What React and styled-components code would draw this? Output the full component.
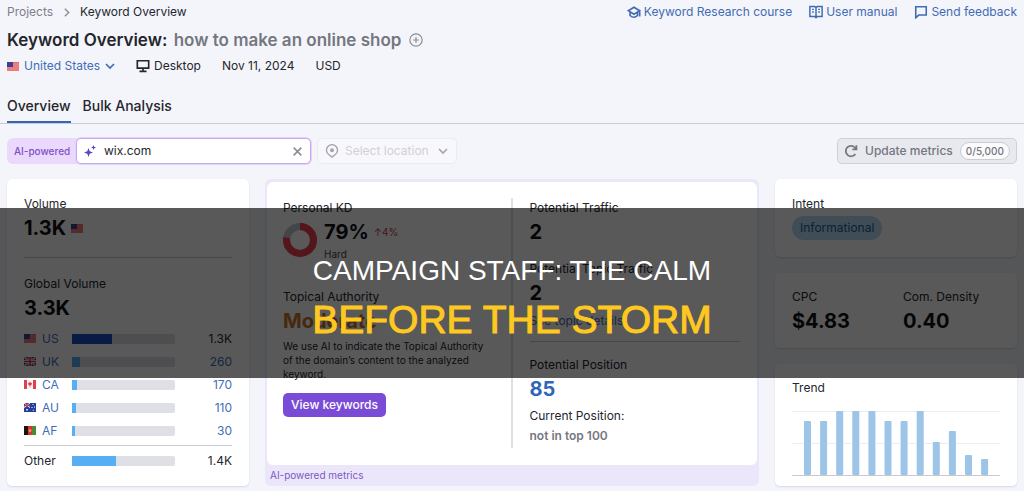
import React from "react";
import styled, { createGlobalStyle } from "styled-components";

const GlobalStyle = createGlobalStyle`
  * { box-sizing: border-box; }
  body {
    margin: 0;
    background: #f4f5fa;
    color: #24262d;
    font-family: Inter, "Liberation Sans", sans-serif;
    font-size: 12px;
    line-height: 20px;
  }
  h1, h2, p, dl, dd { margin: 0; }
  button, input, select { font: inherit; color: inherit; margin: 0; }
  svg { display: block; flex: none; }
`;

const Page = styled.div`
  position: relative;
  padding-bottom: 5px;
  overflow: hidden;
`;
const Header = styled.header`
  padding: 2px 7px 0;
  border-bottom: 1px solid #c9ccd8;
`;
const TopRow = styled.div`
  display: flex;
  justify-content: space-between;
  height: 20px;
`;
const Crumbs = styled.nav`
  display: flex;
  align-items: center;
  gap: 8px;
`;
const CrumbLink = styled.a`
  color: #7d808a;
  text-decoration: none;
`;
const HelpLinks = styled.nav`
  display: flex;
  gap: 17px;
`;
const HelpLink = styled.a`
  display: flex;
  align-items: center;
  gap: 3px;
  color: #426bb3;
  text-decoration: none;
`;
const TitleRow = styled.div`
  display: flex;
  align-items: center;
  gap: 8px;
  margin-top: 6px;
`;
const Title = styled.h1`
  font-size: 17px;
  line-height: 24px;
  font-weight: 600;
`;
const Query = styled.span`
  margin-left: 2px;
  color: #757780;
`;
const IconButton = styled.button`
  display: flex;
  padding: 0;
  border: 0;
  background: none;
  color: #8b8e98;
`;
const Meta = styled.div`
  display: flex;
  align-items: center;
  gap: 21px;
  margin-top: 4px;
`;
const MetaItem = styled.span`
  display: flex;
  align-items: center;
  gap: 4px;
`;
const Country = styled.label`
  display: flex;
  align-items: center;
  gap: 5px;
  color: #3f6db8;
`;
const PlainSelect = styled.select`
  appearance: none;
  field-sizing: content;
  padding: 0;
  border: 0;
  background: none;
  line-height: 20px;
  opacity: 1;
`;
const Tabs = styled.nav`
  display: flex;
  gap: 12px;
  margin-top: 18px;
`;
const Tab = styled.a`
  height: 29px;
  line-height: 24px;
  font-weight: 500;
  font-size: 14px;
  color: inherit;
  text-decoration: none;
  border-bottom: 2px solid ${(p) => (p.$active ? "#3666b0" : "transparent")};
`;
const Toolbar = styled.div`
  display: flex;
  align-items: center;
  gap: 6px;
  padding: 14px 7px 15px;
`;
const DomainField = styled.div`
  display: flex;
  width: 304px;
  height: 26px;
  border-radius: 6px;
  background: #ead9fc;
`;
const DomainLabel = styled.label`
  flex: 1;
  padding-left: 7px;
  font-size: 10px;
  font-weight: 500;
  line-height: 26px;
  white-space: nowrap;
  color: #7d50c8;
`;
const DomainBox = styled.div`
  display: flex;
  align-items: center;
  gap: 8px;
  width: 235px;
  padding: 0 7px;
  border: 1px solid #c9aaf0;
  border-radius: 5px;
  background: #fff;
  box-shadow: 0 0 0 1px #e3d1fa;
`;
const DomainInput = styled.input`
  flex: 1;
  min-width: 0;
  padding: 0;
  border: 0;
  outline: 0;
  background: none;
`;
const Location = styled.label`
  display: flex;
  align-items: center;
  gap: 6px;
  width: 140px;
  height: 26px;
  padding: 0 8px 0 7px;
  border: 1px solid #ebecf2;
  border-radius: 5px;
  background: #f8f8fc;
  color: #a3a6b0;
`;
const LocationSelect = styled(PlainSelect)`
  flex: 1;
  min-width: 0;
  color: #cfd1d9;
`;
const UpdateButton = styled.button`
  display: flex;
  align-items: center;
  gap: 7px;
  height: 26px;
  margin-left: auto;
  padding: 0 6px;
  border: 1px solid #cfd0d6;
  border-radius: 5px;
  background: #e8e9ee;
  font-weight: 500;
  color: #74767e;
`;
const Quota = styled.span`
  padding: 0 5px;
  border: 1px solid #cbccd2;
  border-radius: 9px;
  background: #fbfbfd;
  font-size: 10px;
  line-height: 16px;
`;
const Board = styled.main`
  display: grid;
  grid-template-columns: 242fr 494fr 242fr;
  gap: 16px;
  padding: 0 7px;
`;
const Card = styled.section`
  padding: ${(p) => p.$pad || "15px 17px 14px"};
  border-radius: 5px;
  background: #fff;
  box-shadow: 0 1px 2px #d5d8e4;
`;
const Label = styled.h2`
  font-size: 12px;
  line-height: 20px;
  font-weight: 400;
`;
const Value = styled.p`
  display: flex;
  align-items: center;
  gap: 5px;
  font-size: 20px;
  line-height: 28px;
  font-weight: 700;
  color: ${(p) => p.$color || "#101114"};
`;
const Rule = styled.hr`
  height: 1px;
  margin: ${(p) => p.$space || "15px 0 16px"};
  border: 0;
  background: #cbccd3;
`;
const CountryTable = styled.table`
  width: 100%;
  margin-top: 5px;
  border-collapse: collapse;
  line-height: 20px;
  td, th { height: 23px; padding: 0; font-weight: 400; text-align: left; }
  th { width: 48px; }
  td:last-child { text-align: right; }
`;
const OtherTable = styled(CountryTable)`
  margin-top: 0;
`;
const Place = styled.a`
  display: flex;
  align-items: center;
  gap: 6px;
  color: #3f6db8;
  text-decoration: none;
`;
const Amount = styled.a`
  color: ${(p) => (p.$dark ? "#24262d" : "#3f6db8")};
  text-decoration: none;
`;
const Track = styled.div`
  width: 103px;
  height: 10px;
  border-radius: 0 2px 2px 0;
  overflow: hidden;
  background: #dfe0e5;
`;
const Fill = styled.div`
  height: 100%;
  background: ${(p) => p.$color};
`;
const AiFrame = styled.section`
  display: flex;
  flex-direction: column;
  padding: 3px 2px 1px;
  border-radius: 6px;
  background: #ece6fa;
`;
const AiPanel = styled.div`
  flex: 1;
  display: grid;
  grid-template-columns: 1fr 2px 1fr;
  gap: 17px;
  padding: 16px 17px 17px 16px;
  border-radius: 6px;
  background: #fff;
`;
const AiNote = styled.p`
  padding-left: 3px;
  font-size: 10px;
  line-height: 20px;
  color: #7d58c4;
`;
const Divider = styled.div`
  background: #dedfe4;
`;
const Metric = styled.div`
  margin-bottom: ${(p) => p.$after || 0}px;
`;
const Difficulty = styled.div`
  display: flex;
  align-items: center;
  gap: 7px;
`;
const Delta = styled.span`
  font-size: 10px;
  font-weight: 400;
  color: #c8404a;
`;
const Small = styled.p`
  font-size: 10px;
  line-height: 16px;
  color: #44464e;
`;
const Copy = styled.p`
  margin-top: 4px;
  font-size: 10px;
  line-height: 14px;
`;
const PrimaryButton = styled.button`
  height: 24px;
  margin-top: 12px;
  padding: 0 8px;
  border: 0;
  border-radius: 5px;
  background: #7a4cd6;
  color: #fff;
  font-weight: 500;
`;
const TopicLink = styled.a`
  display: block;
  margin-top: 4px;
  color: #3f6db8;
  text-decoration: none;
`;
const Position = styled.p`
  margin-top: 3px;
`;
const Rank = styled.p`
  font-weight: 600;
  color: #757780;
`;
const Stack = styled.div`
  display: flex;
  flex-direction: column;
  gap: 16px;
`;
const Pill = styled.span`
  display: block;
  width: fit-content;
  margin-top: 2px;
  padding: 0 8px;
  border-radius: 12px;
  background: #b8dcf6;
  color: #2a5f98;
  line-height: 24px;
`;
const Pair = styled.div`
  display: grid;
  grid-template-columns: 1fr 1fr;
  gap: 14px;
`;
const TrendCard = styled(Card)`
  flex: 1;
`;
const Chart = styled.svg`
  width: 100%;
  margin-top: 12px;
`;
const Banner = styled.aside`
  position: absolute;
  top: 208px;
  left: 0;
  right: 0;
  height: 170px;
  display: flex;
  flex-direction: column;
  align-items: center;
  justify-content: center;
  padding-top: 6px;
  background: rgba(0, 0, 0, 0.65);
  font-family: "Liberation Sans", Arial, sans-serif;
  text-align: center;
`;
const BannerLead = styled.p`
  font-size: 28px;
  line-height: 48px;
  color: #fff;
`;
const BannerMain = styled.p`
  font-size: 39px;
  line-height: 50px;
  color: #fec821;
  -webkit-text-stroke: 1px #fec821;
`;

const Icon = ({ size = 14, box = 16, width = 1.8, children }) => (
  <svg width={size} height={size} viewBox={`0 0 ${box} ${box}`} fill="none" stroke="currentColor" strokeWidth={width} aria-hidden="true">
    {children}
  </svg>
);

const Chevron = () => (
  <Icon size={10} box={10} width={1.7}><path d="M1 3l4 4 4-4" /></Icon>
);

const flags = {
  US: (
    <>
      <path fill="#e9696d" d="M0 0h12v9H0z" />
      <path stroke="#f3b3b5" strokeWidth=".6" d="M0 2h12M0 4h12M0 6h12M0 8h12" />
      <path fill="#3b3f95" d="M0 0h6v5H0z" />
    </>
  ),
  UK: (
    <>
      <path fill="#27357e" d="M0 0h12v9H0z" />
      <path stroke="#fff" strokeWidth="1.8" d="M0 0l12 9M12 0L0 9" />
      <path stroke="#d22f3d" strokeWidth=".7" d="M0 0l12 9M12 0L0 9" />
      <path stroke="#fff" strokeWidth="3" d="M6 0v9M0 4.500h12" />
      <path stroke="#d22f3d" strokeWidth="1.6" d="M6 0v9M0 4.500h12" />
    </>
  ),
  CA: (
    <>
      <path fill="#f7f2f3" d="M0 0h12v9H0z" />
      <path fill="#e0404b" d="M0 0h3v9H0zM9 0h3v9H9zM6 1.500l.8 1.200 1.200.3-.4 1.800-1.300 1v1.400h-.6V5.800l-1.300-1L4 3l1.200-.3z" />
    </>
  ),
  AU: (
    <>
      <path fill="#233f9c" d="M0 0h12v9H0z" />
      <path stroke="#fff" strokeWidth="1" d="M0 0l6 4.500M6 0L0 4.500" />
      <path stroke="#d22f3d" strokeWidth="1" d="M3 0v4.500M0 2.200h6" />
      <path fill="#fff" d="M2.300 6h1.500v1.500H2.300zM8.500 1h1v1h-1zM7.500 4h1v1h-1zM10 3.500h1v1h-1zM8.800 6.700h1v1h-1z" />
    </>
  ),
  AF: (
    <>
      <path fill="#1d1412" d="M0 0h4v9H0z" />
      <path fill="#d23a2c" d="M4 0h4v9H4z" />
      <path fill="#4c8b35" d="M8 0h4v9H8z" />
      <circle cx="6" cy="4.500" r="1.500" fill="#ee8a70" />
    </>
  ),
};
const Flag = ({ code }) => (
  <svg width="12" height="9" viewBox="0 0 12 9" aria-hidden="true">{flags[code]}</svg>
);

const countries = [
  { code: "US", amount: "1.3K", share: 39, color: "#1c4fc4", dark: true },
  { code: "UK", amount: "260", share: 8, color: "#57aef3" },
  { code: "CA", amount: "170", share: 5, color: "#57aef3" },
  { code: "AU", amount: "110", share: 3.5, color: "#57aef3" },
  { code: "AF", amount: "30", share: 2.5, color: "#57aef3" },
];
const trend = [54, 54, 64, 64, 64, 54, 54, 64, 33, 44, 20, 16];

const Bar = ({ share, color }) => (
  <Track><Fill $color={color} style={{ width: `${share}%` }} /></Track>
);

const VolumeCard = () => (
  <Card>
    <Label>Volume</Label>
    <Value>1.3K <Flag code="US" /></Value>
    <Rule />
    <Label>Global Volume</Label>
    <Value>3.3K</Value>
    <CountryTable>
      <tbody>
        {countries.map((c) => (
          <tr key={c.code}>
            <th scope="row"><Place href="#"><Flag code={c.code} />{c.code}</Place></th>
            <td><Bar share={c.share} color={c.color} /></td>
            <td><Amount href="#" $dark={c.dark}>{c.amount}</Amount></td>
          </tr>
        ))}
      </tbody>
    </CountryTable>
    <Rule $space="3px 0" />
    <OtherTable>
      <tbody>
        <tr>
          <th scope="row">Other</th>
          <td><Bar share={43} color="#57aef3" /></td>
          <td>1.4K</td>
        </tr>
      </tbody>
    </OtherTable>
  </Card>
);

const Donut = () => (
  <svg width="34" height="34" viewBox="0 0 34 34" fill="none" strokeWidth="7" aria-hidden="true">
    <circle cx="17" cy="17" r="13.500" stroke="#c4c7cf" />
    <circle cx="17" cy="17" r="13.500" stroke="#f0404c" pathLength="100" strokeDasharray="78 22" transform="rotate(-90 17 17)" />
  </svg>
);

const AiCard = () => (
  <AiFrame>
    <AiPanel>
      <div>
        <Metric $after={25}>
          <Label>Personal KD</Label>
          <Difficulty>
            <Donut />
            <div>
              <Value>79% <Delta>↑4%</Delta></Value>
              <Small>Hard</Small>
            </div>
          </Difficulty>
        </Metric>
        <Label>Topical Authority</Label>
        <Value $color="#c4762a">Moderate</Value>
        <Copy>We use AI to indicate the Topical Authority of the domain’s content to the analyzed keyword.</Copy>
        <PrimaryButton type="button">View keywords</PrimaryButton>
      </div>
      <Divider />
      <div>
        <Metric $after={13}>
          <Label>Potential Traffic</Label>
          <Value>2</Value>
        </Metric>
        <Label>Potential Topic Traffic</Label>
        <Value>2</Value>
        <TopicLink href="#">See topic details</TopicLink>
        <Rule $space="10px 0 13px" />
        <Label>Potential Position</Label>
        <Value $color="#2f66b8">85</Value>
        <Position>Current Position:</Position>
        <Rank>not in top 100</Rank>
      </div>
    </AiPanel>
    <AiNote>AI-powered metrics</AiNote>
  </AiFrame>
);

const TrendChart = () => (
  <Chart viewBox="0 0 208 66" role="img" aria-label="Trend">
    <path stroke="#ededf1" d="M0 1.500h208M0 33.500h208" />
    {trend.map((h, i) => (
      <rect key={i} x={12 + i * 16.1} y={65 - h} width="7" height={h} rx="1" fill="#9cc5e8" />
    ))}
    <path stroke="#c9cbd3" d="M0 65.500h208" />
  </Chart>
);

export default function App() {
  return (
    <Page>
      <GlobalStyle />
      <Header>
        <TopRow>
          <Crumbs aria-label="Breadcrumb">
            <CrumbLink href="#">Projects</CrumbLink>
            <Icon size={11} box={10} width={1.3}><path d="M3.500 1.500L7 5 3.500 8.500" stroke="#8b8e98" /></Icon>
            <span>Keyword Overview</span>
          </Crumbs>
          <HelpLinks aria-label="Help">
            <HelpLink href="#">
              <Icon width={1.9}><path d="M1.500 6.500L8 2.500l6.500 4L8 10.500zM3.500 8v4Q8 16 12 12V8M14.500 6.500V13" /></Icon>
              Keyword Research course
            </HelpLink>
            <HelpLink href="#">
              <Icon width={1.7}><path d="M1 1.800h5.500L8 3l1.500-1.200H15v11.400H9.500L8 14.500l-1.500-1.300H1zM8 3v11M3.500 5h2M3.500 8h2M10.500 5h2M10.500 8h2" /></Icon>
              User manual
            </HelpLink>
            <HelpLink href="#">
              <Icon><path d="M2 2h12v9.500H5.500L2 14.500z" /></Icon>
              Send feedback
            </HelpLink>
          </HelpLinks>
        </TopRow>
        <TitleRow>
          <Title>Keyword Overview: <Query>how to make an online shop</Query></Title>
          <IconButton type="button" aria-label="Add keyword">
            <Icon width={1.4}><circle cx="8" cy="8" r="7" /><path d="M8 4.500v7M4.500 8h7" /></Icon>
          </IconButton>
        </TitleRow>
        <Meta>
          <Country>
            <Flag code="US" />
            <PlainSelect aria-label="Country"><option>United States</option></PlainSelect>
            <Chevron />
          </Country>
          <MetaItem>
            <Icon width={1.9}><path d="M1.500 2h13v8.500h-13zM8 10.500V14M4 14.200h8" /></Icon>
            Desktop
          </MetaItem>
          <span>Nov 11, 2024</span>
          <span>USD</span>
        </Meta>
        <Tabs>
          <Tab href="#" $active aria-current="page">Overview</Tab>
          <Tab href="#">Bulk Analysis</Tab>
        </Tabs>
      </Header>
      <Toolbar>
        <DomainField>
          <DomainLabel htmlFor="domain">AI-powered</DomainLabel>
          <DomainBox>
            <Icon size={12} box={12}>
              <path fill="#5b45c4" stroke="none" d="M4.500 3l1.200 3.300L9 7.500 5.700 8.700 4.500 12 3.300 8.700 0 7.500l3.300-1.200zM9.500 0l.7 1.800 1.800.7-1.800.7L9.500 5l-.7-1.800L7 2.500l1.800-.7z" />
            </Icon>
            <DomainInput id="domain" type="text" defaultValue="wix.com" />
            <IconButton type="button" aria-label="Clear">
              <Icon size={11} box={10} width={1.5}><path d="M1.500 1.500l7 7M8.500 1.500l-7 7" /></Icon>
            </IconButton>
          </DomainBox>
        </DomainField>
        <Location>
          <Icon width={1.6}><path d="M8 15l-3.500-2.700A6.300 6.300 0 1 1 11.500 12.300z" /><circle cx="8" cy="7.200" r="1.500" fill="currentColor" /></Icon>
          <LocationSelect aria-label="Location" disabled><option>Select location</option></LocationSelect>
          <Chevron />
        </Location>
        <UpdateButton type="button">
          <Icon width={2}><path d="M13 11.500A6 6 0 1 1 12.500 4l1.500 2M14.200 1.500V6.200H9.500" /></Icon>
          Update metrics
          <Quota>0/5,000</Quota>
        </UpdateButton>
      </Toolbar>
      <Board>
        <VolumeCard />
        <AiCard />
        <Stack>
          <Card $pad="15px 17px 17px">
            <Label>Intent</Label>
            <Pill>Informational</Pill>
          </Card>
          <Card $pad="14px 17px 13px">
            <Pair>
              <div><Label>CPC</Label><Value>$4.83</Value></div>
              <div><Label>Com. Density</Label><Value>0.40</Value></div>
            </Pair>
          </Card>
          <TrendCard $pad="14px 17px 10px">
            <Label>Trend</Label>
            <TrendChart />
          </TrendCard>
        </Stack>
      </Board>
      <Banner>
        <BannerLead>CAMPAIGN STAFF: THE CALM</BannerLead>
        <BannerMain>BEFORE THE STORM</BannerMain>
      </Banner>
    </Page>
  );
}
